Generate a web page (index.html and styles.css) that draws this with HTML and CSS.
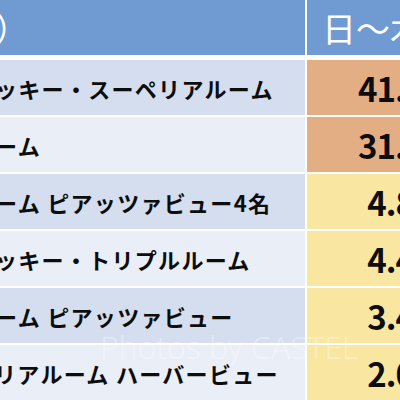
FILE: index.html
```html
<!DOCTYPE html>
<html lang="ja">
<head>
<meta charset="utf-8">
<title>客室タイプ別 割合</title>
<link rel="stylesheet" href="styles.css">
</head>
<body>
<div class="sheet">
  <div class="row head">
    <div class="name"><span class="paren">）</span></div>
    <div class="val">日～木曜日</div>
  </div>
  <div class="row band-a">
    <div class="name">ッキー・スーペリアルーム</div>
    <div class="val orange">41.5%</div>
  </div>
  <div class="row band-b">
    <div class="name">ーム</div>
    <div class="val orange">31.3%</div>
  </div>
  <div class="row band-a">
    <div class="name">ーム ピアッツァビュー4名</div>
    <div class="val yellow">4.8%</div>
  </div>
  <div class="row band-b">
    <div class="name">ッキー・トリプルルーム</div>
    <div class="val yellow">4.4%</div>
  </div>
  <div class="row band-a">
    <div class="name">ーム ピアッツァビュー</div>
    <div class="val yellow">3.4%</div>
  </div>
  <div class="row band-b">
    <div class="name shift">リアルーム ハーバービュー</div>
    <div class="val yellow">2.0%</div>
  </div>
  <div class="watermark">Photos by CASTEL</div>
</div>
</body>
</html>
```
FILE: styles.css
```css
html, body {
  margin: 0;
  padding: 0;
  background: #ffffff;
  overflow: hidden;
}

.sheet {
  position: relative;
  width: 400px;
  height: 400px;
  overflow: hidden;
  display: flex;
  flex-direction: column;
  gap: 2px;
  font-family: "Noto Sans CJK JP", "Noto Sans", sans-serif;
  color: #0d0d0d;
}

.row {
  display: flex;
  gap: 2px;
  height: 55px;
  flex: none;
}

.name {
  width: 305px;
  flex: none;
  display: flex;
  align-items: center;
  overflow: hidden;
  white-space: nowrap;
  font-size: 22px;
  font-weight: 700;
  letter-spacing: 1.3px;
  text-indent: -5px;
}

.name.shift {
  text-indent: -6px;
}

.val {
  width: 198px;
  flex: none;
  display: flex;
  align-items: center;
  justify-content: center;
  white-space: nowrap;
  font-size: 33px;
  font-weight: 700;
  letter-spacing: -1px;
}

.head {
  margin-bottom: 3px;
}

.head .name,
.head .val {
  background: #709bd2;
  color: #ffffff;
  font-weight: 400;
  font-size: 34px;
  letter-spacing: 0;
}

.head .name {
  text-indent: -5px;
}

.head .val {
  justify-content: flex-start;
  padding-left: 15px;
  box-sizing: border-box;
}

.band-a .name {
  background: #d4deef;
}

.band-b .name {
  background: #eaeef7;
}

.orange {
  background: #e4ae84;
}

.yellow {
  background: #f9e6a0;
}

.watermark {
  position: absolute;
  left: 100px;
  top: 331px;
  font-family: "Open Sans", "Liberation Sans", sans-serif;
  font-weight: 300;
  font-size: 32px;
  line-height: 1;
  color: rgba(255, 255, 255, 0.38);
  white-space: nowrap;
  pointer-events: none;
}
```
